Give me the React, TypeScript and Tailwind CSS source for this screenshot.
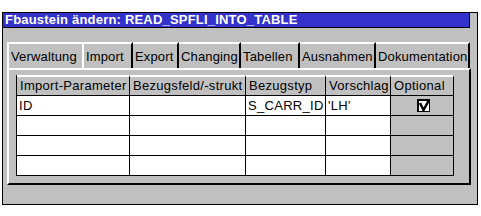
import React from "react";

const tabs = [
  { label: "Verwaltung", w: "w-[77px]", first: true },
  { label: "Import", w: "w-[49px]" },
  { label: "Export", w: "w-[46px]" },
  { label: "Changing", w: "w-[62px]" },
  { label: "Tabellen", w: "w-[59px]" },
  { label: "Ausnahmen", w: "w-[76px]" },
  { label: "Dokumentation", w: "w-[94px]" },
];

const headers = ["Import-Parameter", "Bezugsfeld/-strukt", "Bezugstyp", "Vorschlag", "Optional"];

const rows = [
  ["ID", "", "S_CARR_ID", "'LH'", true],
  ["", "", "", "", false],
  ["", "", "", "", false],
  ["", "", "", "", false],
];

const CheckMark = () => (
  <svg width="13" height="13" viewBox="0 0 13 13">
    <rect x="0" y="0" width="13" height="13" fill="#000" />
    <rect x="2" y="2" width="10" height="10" fill="#fff" />
    <path d="M3 4 L6.5 11 L12 1" stroke="#000" strokeWidth="2.5" fill="none" />
  </svg>
);

export default function App() {
  return (
    <div className="w-[481px] h-[216px] bg-white pt-[12px] pl-[2px] font-['Liberation_Sans',Arial,sans-serif] text-[13px] tracking-[0.3px] text-black">
      <div className="w-[476px] h-[193px] border border-black bg-[#c0c0c0] flex flex-col">
        <div className="h-[15px] mr-[7px] bg-[#3333cc] border-r border-b border-black text-white font-bold text-[13px] leading-[14px] pl-[2px] tracking-[0.2px]">
          Fbaustein ändern: READ_SPFLI_INTO_TABLE
        </div>
        <div className="flex ml-[4px] mt-[14px] h-[26px]">
          {tabs.map((t) => (
            <div
              key={t.label}
              className={`${t.w} h-[26px] border-t-2 border-white flex items-center pl-[2px] leading-none tracking-[0.15px] overflow-hidden whitespace-nowrap ${
                t.first ? "border-l-2 border-r-2" : "border-r-2 border-r-black"
              }`}
            >
              {t.label}
            </div>
          ))}
        </div>
        <div className="ml-[4px] w-[464px] h-[117px] border-l-2 border-t-2 border-white border-r-2 border-b-2 border-r-black border-b-black pl-[7px] pt-[5px]">
          <div className="grid grid-cols-[113px_116px_80px_65px_63px] w-[437px] border-l border-black">
            {headers.map((h) => (
              <div
                key={h}
                className="h-[21px] bg-[#c0c0c0] border-t-2 border-white border-r border-r-black border-b border-b-black pl-[3px] leading-[18px] overflow-hidden whitespace-nowrap"
              >
                {h}
              </div>
            ))}
            {rows.map((r, i) =>
              r.map((c, j) => (
                <div
                  key={`${i}-${j}`}
                  className={`h-[20px] border-r border-b border-black pl-[2px] leading-[19px] overflow-hidden whitespace-nowrap ${
                    j === 4 ? "bg-[#c0c0c0] flex items-center justify-center" : "bg-white"
                  }`}
                >
                  {j === 4 ? (c ? <CheckMark /> : null) : (c as string)}
                </div>
              ))
            )}
          </div>
        </div>
      </div>
    </div>
  );
}
